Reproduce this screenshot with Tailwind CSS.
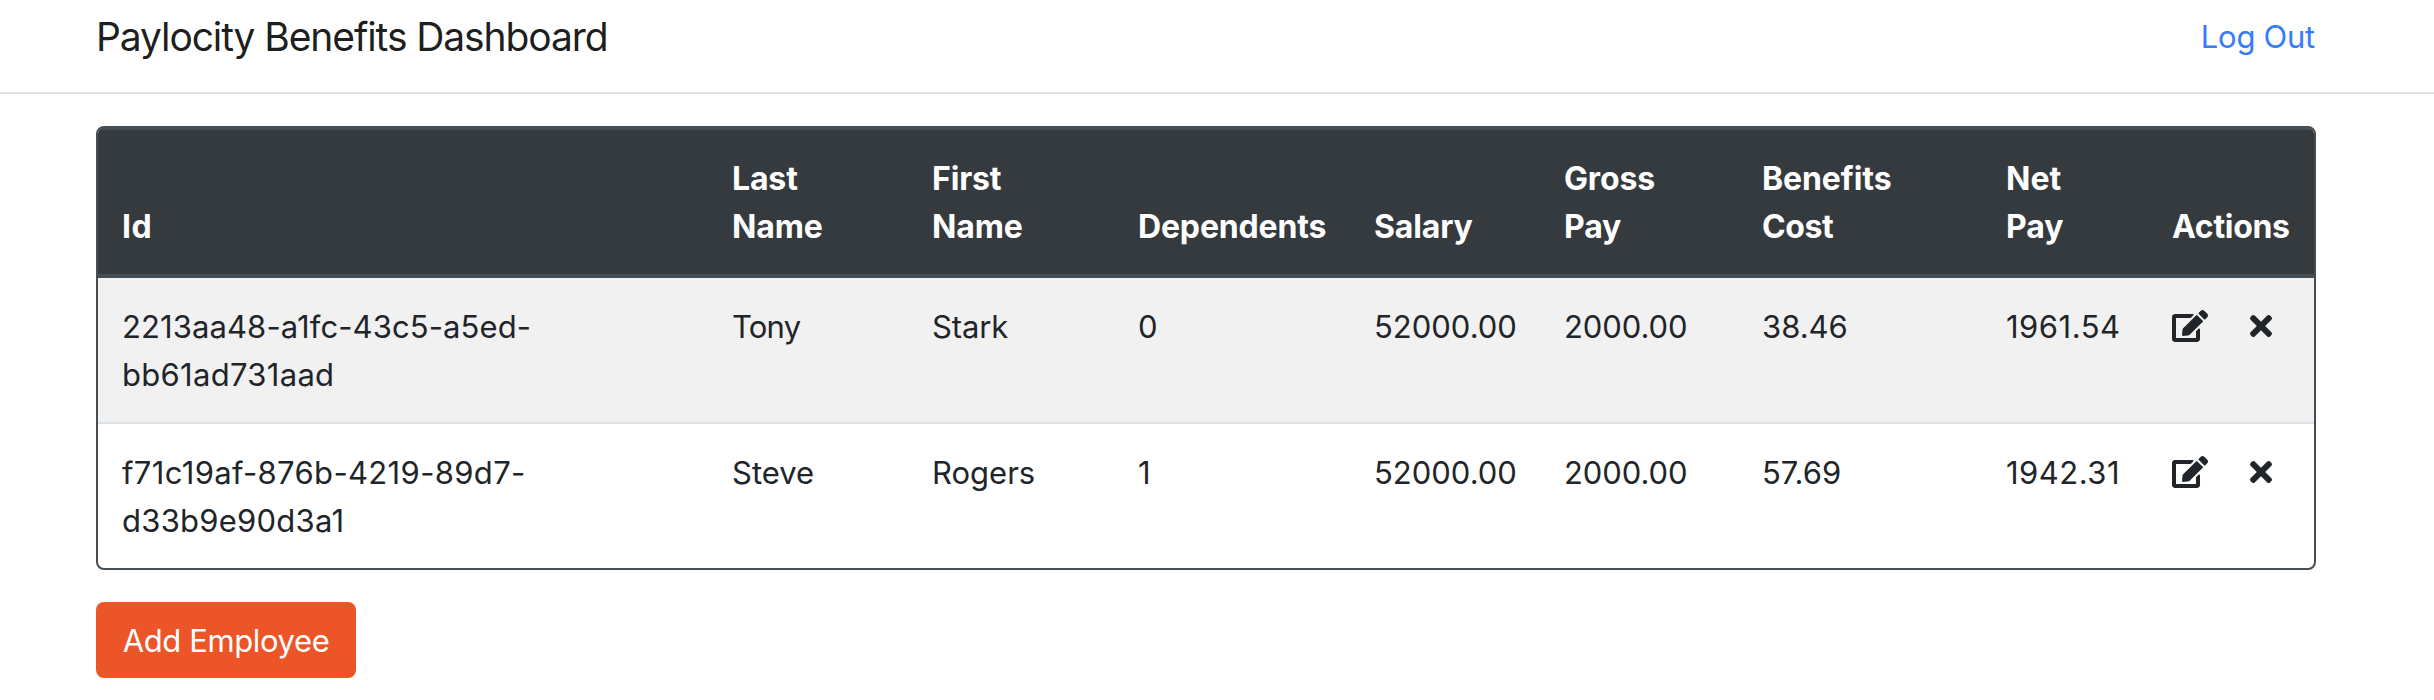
<!DOCTYPE html>
<html lang="en">
<head>
<meta charset="utf-8">
<title>Paylocity Benefits Dashboard</title>
<script src="https://cdn.jsdelivr.net/npm/@tailwindcss/browser@4"></script>
</head>
<body class="bg-white font-['Inter','Liberation_Sans',sans-serif] text-[31px] leading-[48px] text-[#212529] h-[700px] overflow-hidden">
<svg class="hidden">
  <symbol id="edit" viewBox="0 0 576 512"><path d="M402.6 83.2l90.2 90.2c3.8 3.8 3.8 10 0 13.8L274.4 405.6l-92.8 10.3c-12.4 1.4-22.9-9.1-21.5-21.5l10.3-92.8L388.8 83.2c3.8-3.8 10-3.8 13.8 0zm162-22.9l-48.8-48.8c-15.2-15.2-39.9-15.2-55.2 0l-35.4 35.4c-3.8 3.8-3.8 10 0 13.8l90.2 90.2c3.8 3.8 10 3.8 13.8 0l35.4-35.4c15.2-15.3 15.2-40 0-55.2zM384 346.2V448H64V128h229.8c3.2 0 6.2-1.3 8.5-3.5l40-40c7.6-7.6 2.2-20.5-8.5-20.5H48C21.5 64 0 85.5 0 112v352c0 26.500 21.500 48 48 48h352c26.500 0 48-21.500 48-48V306.200c0-10.700-12.900-16-20.500-8.500l-40 40c-2.200 2.300-3.500 5.300-3.500 8.500z"/></symbol>
  <symbol id="times" viewBox="0 0 352 512"><path d="M242.720 256l100.070-100.070c12.280-12.280 12.280-32.190 0-44.480l-22.240-22.240c-12.280-12.280-32.190-12.280-44.480 0L176 189.280 75.930 89.210c-12.280-12.280-32.190-12.280-44.480 0L9.210 111.450c-12.280 12.280-12.280 32.190 0 44.480L109.280 256 9.210 356.070c-12.280 12.280-12.280 32.190 0 44.480l22.240 22.240c12.280 12.280 32.200 12.280 44.480 0L176 322.720l100.070 100.070c12.280 12.280 32.200 12.280 44.480 0l22.240-22.240c12.280-12.280 12.280-32.190 0-44.480L242.720 256z"/></symbol>
</svg>
<nav class="flex h-[94px] items-start justify-between border-b-2 border-[#dee2e6] pl-[96px] pr-[120px]">
  <span class="mt-[7px] text-[39px] leading-[60px] tracking-[-1.1px] text-black/90">Paylocity Benefits Dashboard</span>
  <a class="mt-[13px] -mr-px tracking-[-0.26px] text-[#387df6]">Log Out</a>
</nav>
<main class="px-[96px] pt-8 w-[2412px]">
  <div class="overflow-hidden rounded-lg border-2 border-[#454d55]">
    <table class="w-full table-fixed border-collapse text-left">
      <colgroup>
        <col class="w-[610px]"><col class="w-[200px]"><col class="w-[206px]"><col class="w-[236px]"><col class="w-[190px]"><col class="w-[198px]"><col class="w-[244px]"><col class="w-[166px]"><col class="w-[166px]">
      </colgroup>
      <thead class="bg-[#353a3e] text-[32px] text-white">
        <tr class="h-[150px] align-bottom shadow-[inset_0_2px_#454d55,inset_0_-4px_#454d55]">
          <th class="px-6 pb-[27px] font-bold tracking-[0.5px]">Id</th>
          <th class="px-6 pb-[27px] font-bold tracking-[-0.15px]">Last<br>Name</th>
          <th class="px-6 pb-[27px] font-bold tracking-[-0.15px]">First<br>Name</th>
          <th class="px-6 pb-[27px] font-bold tracking-[-0.15px]">Dependents</th>
          <th class="px-6 pb-[27px] font-bold tracking-[-0.15px]">Salary</th>
          <th class="px-6 pb-[27px] font-bold tracking-[-0.15px]">Gross<br>Pay</th>
          <th class="px-6 pb-[27px] font-bold tracking-[-0.1px]">Benefits<br><span class="tracking-[-0.4px]">Cost</span></th>
          <th class="px-6 pb-[27px] font-bold">Net<br>Pay</th>
          <th class="px-6 pb-[27px] font-bold tracking-[-0.3px]">Actions</th>
        </tr>
      </thead>
      <tbody>
        <tr class="h-[146px] bg-[#f1f1f1] align-top shadow-[inset_0_-2px_#dee2e6]">
          <td class="px-6 pt-[25px]"><span class="tracking-[0.1px]">2213aa48-a1fc-43c5-a5ed-</span><br><span class="tracking-[0.3px]">bb61ad731aad</span></td>
          <td class="px-6 pt-[25px] tracking-[-0.8px]">Tony</td>
          <td class="px-6 pt-[25px] tracking-[-0.15px]">Stark</td>
          <td class="px-6 pt-[25px]">0</td>
          <td class="px-6 pt-[25px]">52000.00</td>
          <td class="px-6 pt-[25px] tracking-[-0.1px]">2000.00</td>
          <td class="px-6 pt-[25px]">38.46</td>
          <td class="px-6 pt-[25px] tracking-[0.5px]">1961.54</td>
          <td class="px-6 pt-8"><div class="flex gap-[42px]"><svg class="h-8 w-9 fill-current"><use href="#edit"/></svg><svg class="h-8 w-[22px] fill-current"><use href="#times"/></svg></div></td>
        </tr>
        <tr class="h-[144px] align-top">
          <td class="px-6 pt-[25px]"><span class="tracking-[0.35px]">f71c19af-876b-4219-89d7-</span><br><span class="tracking-[0.25px]">d33b9e90d3a1</span></td>
          <td class="px-6 pt-[25px]">Steve</td>
          <td class="px-6 pt-[25px]">Rogers</td>
          <td class="px-6 pt-[25px]">1</td>
          <td class="px-6 pt-[25px]">52000.00</td>
          <td class="px-6 pt-[25px] tracking-[-0.1px]">2000.00</td>
          <td class="px-6 pt-[25px]">57.69</td>
          <td class="px-6 pt-[25px] tracking-[0.5px]">1942.31</td>
          <td class="px-6 pt-8"><div class="flex gap-[42px]"><svg class="h-8 w-9 fill-current"><use href="#edit"/></svg><svg class="h-8 w-[22px] fill-current"><use href="#times"/></svg></div></td>
        </tr>
      </tbody>
    </table>
  </div>
  <button class="mt-8 block h-[76px] w-[260px] rounded-lg bg-[#eb5528] pt-0.5 text-center tracking-[-0.38px] text-white">Add Employee</button>
</main>
</body>
</html>
